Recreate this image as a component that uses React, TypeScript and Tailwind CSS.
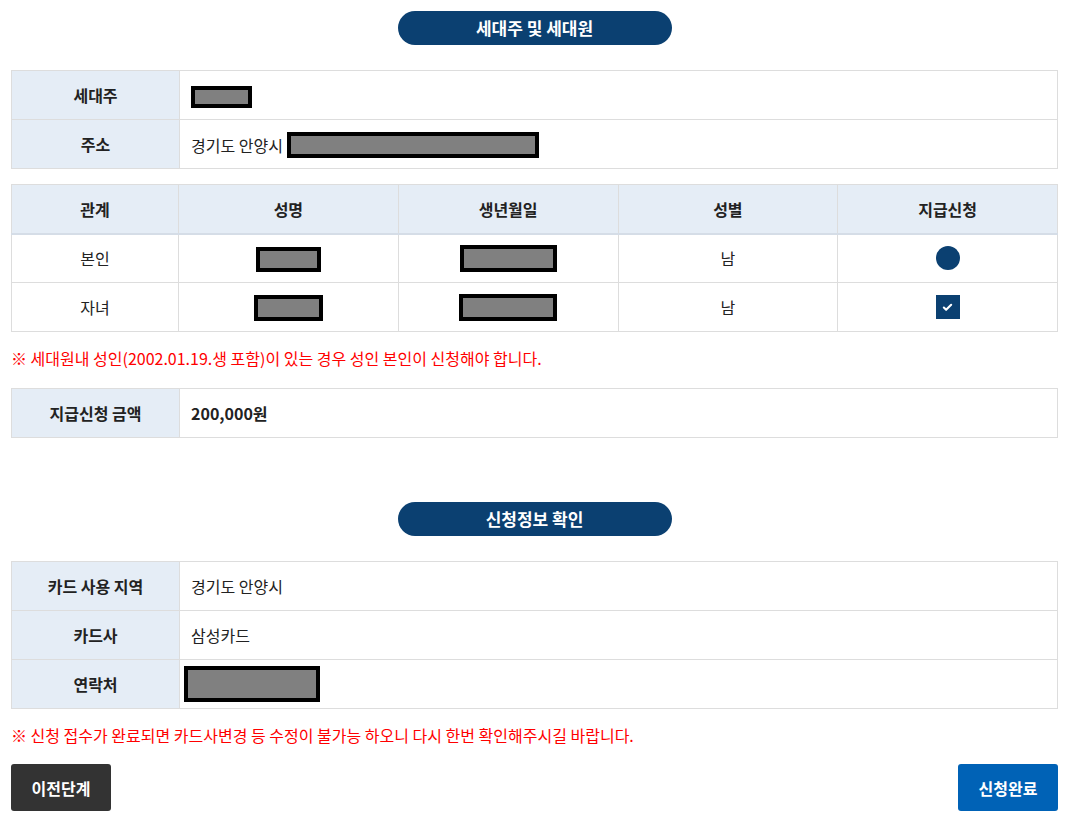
import { Check } from 'lucide-react';

const Redact = ({ w, h }: { w: number; h: number }) => (
    <span
        className="inline-block align-middle border-[4px] border-black bg-[#808080]"
        style={{ width: w, height: h }}
    />
);

const Pill = ({ children }: { children: string }) => (
    <div className="flex justify-center">
        <div className="w-[274px] h-[34px] rounded-full bg-[#0b4071] text-white font-bold text-[17px] flex items-center justify-center">
            {children}
        </div>
    </div>
);

const Th = ({ children }: { children: React.ReactNode }) => (
    <th className="w-[168px] h-[49px] bg-[#e5edf6] border border-[#dddddd] font-bold text-[16px] text-[#222] text-center">
        {children}
    </th>
);

const Td = ({ children, bold }: { children: React.ReactNode; bold?: boolean }) => (
    <td className={`h-[49px] border border-[#dddddd] px-[11px] text-[16px] text-[#222] ${bold ? 'font-bold' : ''}`}>
        {children}
    </td>
);

const App = () => {
    const members = [
        { rel: '본인', name: [65, 25], birth: [97, 27], sex: '남', mark: 'circle' },
        { rel: '자녀', name: [69, 26], birth: [98, 27], sex: '남', mark: 'check' },
    ];

    return (
        <div className="min-h-screen bg-white pl-[11px] pr-[18px] pt-[11px] font-['Noto_Sans_CJK_KR','Noto_Sans',sans-serif] text-[#222]">
            <Pill>세대주 및 세대원</Pill>

            {/* 세대주 */}
            <table className="w-full border-collapse mt-[25px]">
                <tbody>
                    <tr>
                        <Th>세대주</Th>
                        <Td><Redact w={61} h={22} /></Td>
                    </tr>
                    <tr>
                        <Th>주소</Th>
                        <Td>
                            <span className="align-middle">경기도 안양시 </span>
                            <Redact w={252} h={26} />
                        </Td>
                    </tr>
                </tbody>
            </table>

            {/* 세대원 목록 */}
            <table className="w-full border-collapse mt-[15px] table-fixed">
                <thead>
                    <tr className="bg-[#e5edf6]">
                        <th className="w-[167px] h-[49px] border border-[#dddddd] border-b-2 border-b-[#d5dde7] font-bold text-[16px]">관계</th>
                        <th className="h-[49px] border border-[#dddddd] border-b-2 border-b-[#d5dde7] font-bold text-[16px]">성명</th>
                        <th className="h-[49px] border border-[#dddddd] border-b-2 border-b-[#d5dde7] font-bold text-[16px]">생년월일</th>
                        <th className="h-[49px] border border-[#dddddd] border-b-2 border-b-[#d5dde7] font-bold text-[16px]">성별</th>
                        <th className="h-[49px] border border-[#dddddd] border-b-2 border-b-[#d5dde7] font-bold text-[16px]">지급신청</th>
                    </tr>
                </thead>
                <tbody>
                    {members.map((m) => (
                        <tr key={m.rel} className="text-center text-[16px]">
                            <td className="h-[49px] border border-[#dddddd]">{m.rel}</td>
                            <td className="h-[49px] border border-[#dddddd]"><Redact w={m.name[0]} h={m.name[1]} /></td>
                            <td className="h-[49px] border border-[#dddddd]"><Redact w={m.birth[0]} h={m.birth[1]} /></td>
                            <td className="h-[49px] border border-[#dddddd]">{m.sex}</td>
                            <td className="h-[49px] border border-[#dddddd]">
                                <div className="flex justify-center">
                                    {m.mark === 'circle' ? (
                                        <span className="block w-[24px] h-[24px] rounded-full bg-[#0b4071]" />
                                    ) : (
                                        <span className="flex w-[24px] h-[24px] items-center justify-center bg-[#0b4071]">
                                            <Check className="w-[11px] h-[11px] text-white" strokeWidth={4.5} />
                                        </span>
                                    )}
                                </div>
                            </td>
                        </tr>
                    ))}
                </tbody>
            </table>

            <p className="mt-[15px] text-[16px] text-[#ff0000] leading-[22px]">
                ※ 세대원내 성인(2002.01.19.생 포함)이 있는 경우 성인 본인이 신청해야 합니다.
            </p>

            <table className="w-full border-collapse mt-[19px]">
                <tbody>
                    <tr>
                        <Th>지급신청 금액</Th>
                        <Td bold>200,000원</Td>
                    </tr>
                </tbody>
            </table>

            <div className="mt-[64px]">
                <Pill>신청정보 확인</Pill>
            </div>

            <table className="w-full border-collapse mt-[25px]">
                <tbody>
                    <tr>
                        <Th>카드 사용 지역</Th>
                        <Td>경기도 안양시</Td>
                    </tr>
                    <tr>
                        <Th>카드사</Th>
                        <Td>삼성카드</Td>
                    </tr>
                    <tr>
                        <Th>연락처</Th>
                        <td className="h-[49px] border border-[#dddddd] px-[4px]">
                            <Redact w={136} h={36} />
                        </td>
                    </tr>
                </tbody>
            </table>

            <p className="mt-[15px] text-[16px] text-[#ff0000] leading-[22px]">
                ※ 신청 접수가 완료되면 카드사변경 등 수정이 불가능 하오니 다시 한번 확인해주시길 바랍니다.
            </p>

            <div className="mt-[18px] flex justify-between">
                <button className="w-[100px] h-[47px] rounded-[3px] bg-[#333333] text-white font-bold text-[16px]">
                    이전단계
                </button>
                <button className="w-[100px] h-[47px] rounded-[3px] bg-[#0062b6] text-white font-bold text-[16px]">
                    신청완료
                </button>
            </div>
        </div>
    );
};

export default App;
